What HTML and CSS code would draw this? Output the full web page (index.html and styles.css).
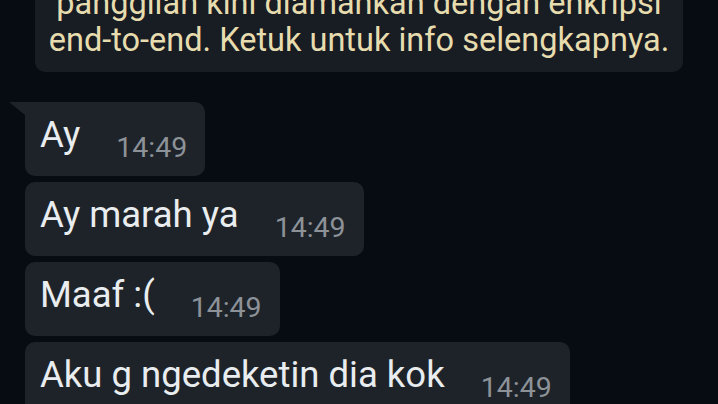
FILE: index.html
```html
<!DOCTYPE html>
<html lang="id">
<head>
<meta charset="utf-8">
<link rel="stylesheet" href="styles.css">
</head>
<body>
<div class="chat">
  <div class="notice-row">
    <div class="notice">panggilan kini diamankan dengan enkripsi<br>end-to-end. Ketuk untuk info selengkapnya.</div>
  </div>
  <div class="messages">
    <div class="bubble first"><span class="text">Ay</span><span class="time">14:49</span></div>
    <div class="bubble"><span class="text">Ay marah ya</span><span class="time">14:49</span></div>
    <div class="bubble"><span class="text">Maaf :(</span><span class="time">14:49</span></div>
    <div class="bubble"><span class="text">Aku g ngedeketin dia kok</span><span class="time">14:49</span></div>
  </div>
</div>
</body>
</html>
```
FILE: styles.css
```css
html, body {
  margin: 0;
  padding: 0;
  width: 718px;
  height: 404px;
  overflow: hidden;
  background: #070b12;
  font-family: Roboto, "Noto Sans", sans-serif;
}
.chat {
  display: flex;
  flex-direction: column;
  margin-top: -15px;
}
.notice-row {
  display: flex;
  padding-left: 35px;
}
.notice {
  width: 648px;
  background: #181d23;
  color: #e7dcae;
  font-size: 32.5px;
  line-height: 37px;
  text-align: center;
  padding: 0 0 13px;
  border-radius: 10px;
  box-sizing: border-box;
}
.messages {
  display: flex;
  flex-direction: column;
  align-items: flex-start;
  gap: 6px;
  padding-left: 25px;
  margin-top: 30px;
}
.bubble {
  position: relative;
  display: flex;
  align-items: flex-end;
  height: 74px;
  box-sizing: border-box;
  padding: 0 18px 13px 15px;
  background: #1e2329;
  border-radius: 10px;
}
.bubble.first {
  border-top-left-radius: 0;
}
.bubble.first::before {
  content: "";
  position: absolute;
  left: -16px;
  top: 0;
  border-top: 13px solid #1e2329;
  border-left: 16px solid transparent;
}
.text {
  color: #e9edef;
  font-size: 36.5px;
  line-height: 40px;
  margin-bottom: 8px;
}
.time {
  color: #8c9298;
  font-size: 28.5px;
  line-height: 30px;
  margin-left: 36px;
}
```
